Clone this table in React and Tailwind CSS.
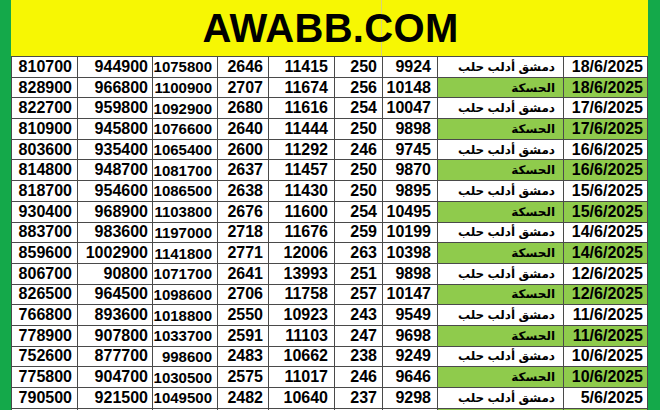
const rows = [
  ["18/6/2025", "d", "9924", "250", "11415", "2646", "1075800", "944900", "810700"],
  ["18/6/2025", "h", "10148", "256", "11674", "2707", "1100900", "966800", "828900"],
  ["17/6/2025", "d", "10047", "254", "11616", "2680", "1092900", "959800", "822700"],
  ["17/6/2025", "h", "9898", "250", "11444", "2640", "1076600", "945800", "810900"],
  ["16/6/2025", "d", "9745", "246", "11292", "2600", "1065400", "935400", "803600"],
  ["16/6/2025", "h", "9870", "250", "11457", "2637", "1081700", "948700", "814800"],
  ["15/6/2025", "d", "9895", "250", "11430", "2638", "1086500", "954600", "818700"],
  ["15/6/2025", "h", "10495", "254", "11600", "2676", "1103800", "968900", "930400"],
  ["14/6/2025", "d", "10199", "259", "11676", "2718", "1197000", "983600", "883700"],
  ["14/6/2025", "h", "10398", "263", "12006", "2771", "1141800", "1002900", "859600"],
  ["12/6/2025", "d", "9898", "251", "13993", "2641", "1071700", "90800", "806700"],
  ["12/6/2025", "h", "10147", "257", "11758", "2706", "1098600", "964500", "826500"],
  ["11/6/2025", "d", "9549", "243", "10923", "2550", "1018800", "893600", "766800"],
  ["11/6/2025", "h", "9698", "247", "11103", "2591", "1033700", "907800", "778900"],
  ["10/6/2025", "d", "9249", "238", "10662", "2483", "998600", "877700", "752600"],
  ["10/6/2025", "h", "9646", "246", "11017", "2575", "1030500", "904700", "775800"],
  ["5/6/2025", "d", "9298", "237", "10640", "2482", "1049500", "921500", "790500"],
  ["", "h", "", "", "", "", "", "", ""],
];

const cell = "h-[20.7px] flex items-center justify-end border-r border-b border-[#4a4a4a] overflow-hidden";

function Row({ r }) {
  const green = r[1] === "h";
  const hl = green ? "bg-[#8fcb4c]" : "bg-white";
  return (
    <div className="grid shrink-0 grid-cols-[66px_75px_65px_51px_66px_48px_55px_126px_84px]">
      <div className={`${cell} pr-[5px] text-[16px]`}>{r[8]}</div>
      <div className={`${cell} pr-[4px] text-[16px]`}>{r[7]}</div>
      <div className={`${cell} pr-[5px] text-[15px]`}>{r[6]}</div>
      <div className={`${cell} pr-[5px] text-[16px]`}>{r[5]}</div>
      <div className={`${cell} pr-[6px] text-[16px]`}>{r[4]}</div>
      <div className={`${cell} pr-[5px] text-[16px]`}>{r[3]}</div>
      <div className={`${cell} pr-[6px] text-[16px]`}>{r[2]}</div>
      <div dir="rtl" className={`${cell} ${hl} justify-start pr-[8px] text-[12px]`}>
        {r[0] === "" ? "" : green ? "الحسكة" : "دمشق أدلب حلب"}
      </div>
      <div className={`${cell} ${hl} pr-[4px] text-[16px]`}>{r[0]}</div>
    </div>
  );
}

export default function App() {
  return (
    <div
      className="w-[660px] h-[410px] overflow-hidden flex bg-white text-black font-bold leading-none"
      style={{ fontFamily: '"Liberation Sans", "DejaVu Sans", Arial, sans-serif' }}
    >
      <div className="w-[11px] shrink-0 bg-[#14a94a]" />
      <div className="w-[637px] shrink-0 flex flex-col">
        <div className="relative shrink-0 h-[56px] bg-[#f7f703] flex items-center justify-center">
          <div className="absolute left-[370px] top-0 h-full w-px bg-[#d6d27a]" />
          <span className="relative text-[40px] leading-normal tracking-[0.3px] pl-[2px]">AWABB.COM</span>
        </div>
        <div className="shrink-0 border-l border-t border-[#4a4a4a] bg-white">
          {rows.map((r, i) => (
            <Row key={i} r={r} />
          ))}
        </div>
      </div>
      <div className="flex-1 bg-[#14a94a]" />
    </div>
  );
}
